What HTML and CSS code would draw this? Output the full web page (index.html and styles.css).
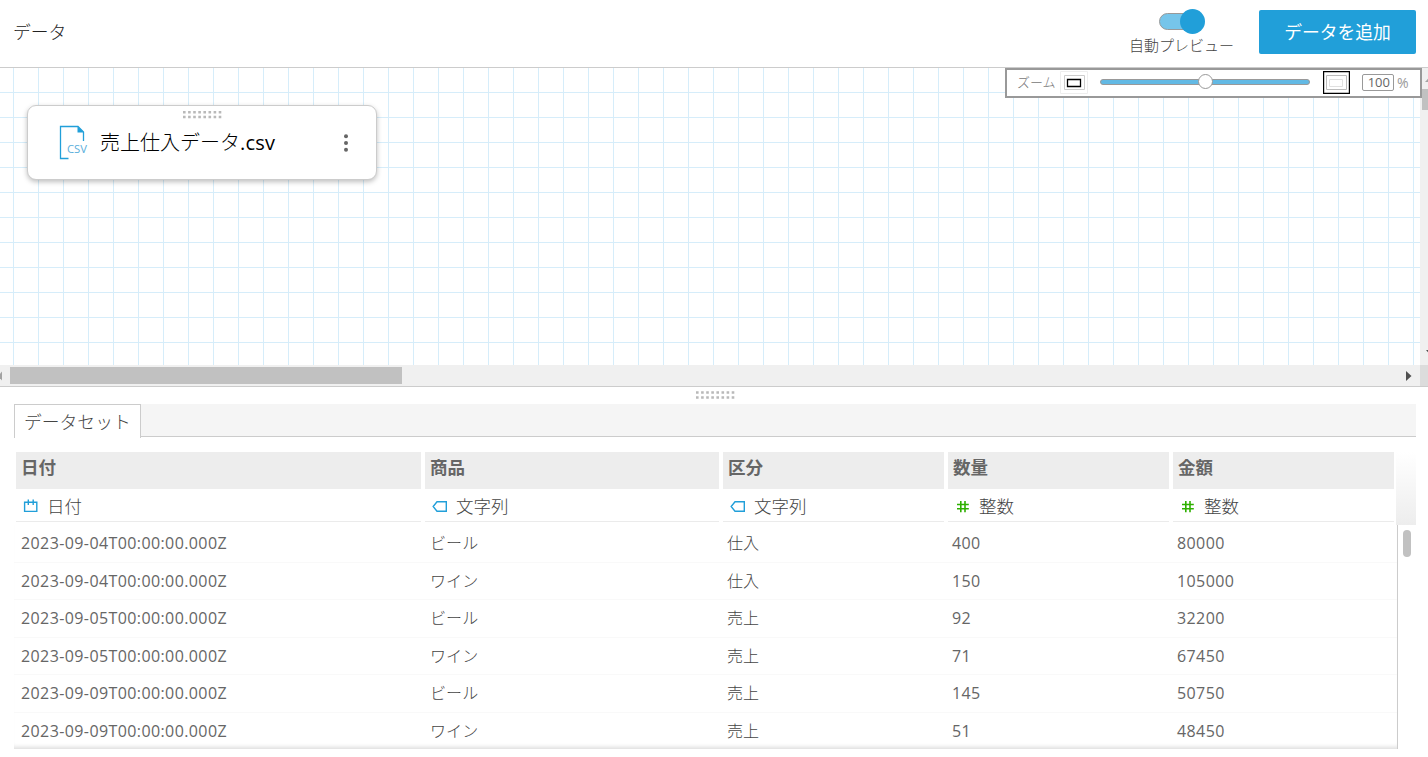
FILE: index.html
```
<!DOCTYPE html>
<html lang="ja">
<head>
    <meta charset="UTF-8">
    <meta name="viewport" content="width=device-width, initial-scale=1.0">
    <title>データ</title>
    <link rel="stylesheet" href="styles.css">
</head>
<body>
    <header class="page-header">
        <h1 class="page-title">データ</h1>
        <div class="auto-preview">
            <div class="toggle"><span class="toggle-track"></span><span class="toggle-knob"></span></div>
            <span class="toggle-label">自動プレビュー</span>
        </div>
        <button class="add-btn">データを追加</button>
    </header>

    <section class="canvas">
        <div class="canvas-main">
            <div class="canvas-grid">
                <div class="node">
                    <svg class="grip node-grip" width="39" height="8" viewBox="0 0 39 8"><path d="M0 1.2h39M0 6h39" stroke="#b9b9b9" stroke-width="2.4" stroke-dasharray="2.6 2.5"/></svg>
                    <svg class="csv-icon" width="30" height="36" viewBox="0 0 30 36">
                        <path d="M9.5 33.5H1.5V1.5H19L24.5 7V16" fill="none" stroke="#219fd9" stroke-width="1.3"/>
                        <path d="M18.5 1.2V7.5H25Z" fill="#219fd9"/>
                        <text x="8" y="28" class="csv-text" textLength="20" lengthAdjust="spacingAndGlyphs">CSV</text>
                    </svg>
                    <span class="node-name">売上仕入データ<span class="latin">.csv</span></span>
                    <svg class="node-menu" width="6" height="18" viewBox="0 0 6 18" fill="#666"><circle cx="3" cy="2.3" r="2"/><circle cx="3" cy="9" r="2"/><circle cx="3" cy="15.7" r="2"/></svg>
                </div>
            </div>
            <div class="v-scroll">
                <svg width="8" height="21" viewBox="0 0 8 21"><path d="M5 14h8L9 9.5Z" fill="#a3a3a3"/></svg>
                <div class="v-thumb"></div>
                <svg class="v-arrow" width="8" height="5" viewBox="0 0 8 5"><path d="M6 0h8L10 4.5Z" fill="#505050"/></svg>
            </div>
        </div>
        <div class="h-scroll">
            <svg width="10" height="10" viewBox="0 0 10 10"><path d="M2 .5V9.5L-2 5Z" fill="#a3a3a3"/></svg>
            <div class="h-thumb"></div>
            <svg class="h-arrow" width="6" height="10" viewBox="0 0 6 10"><path d="M0 0V10L5.5 5Z" fill="#505050"/></svg>
            <div class="scroll-corner"></div>
        </div>

        <div class="zoom-panel">
            <span class="zoom-label">ズーム</span>
            <svg class="zoom-out" width="28" height="23" viewBox="0 0 28 23" fill="none">
                <path d="M.5.5h27v22H.5Z" stroke="#eee"/>
                <path d="M4.5 4.5h20v14H4.5Z" stroke="#ccc"/>
                <path d="M7.5 8.5h13v7h-13Z" stroke="#000" stroke-width="1.3"/>
            </svg>
            <div class="slider"><span class="slider-knob"></span></div>
            <svg class="zoom-in" width="27" height="23" viewBox="0 0 27 23" fill="none">
                <path d="M.5.5h26v22H.5Z" stroke="#000" stroke-width="1.4"/>
                <path d="M3.5 4.5h20v14h-20Z" stroke="#bbb"/>
                <path d="M6.5 8.5h13v7h-13Z" stroke="#e0e0e0"/>
            </svg>
            <span class="zoom-value">100</span>
            <span class="zoom-unit">%</span>
        </div>
    </section>

    <div class="splitter">
        <svg class="grip" width="39" height="8" viewBox="0 0 39 8"><path d="M0 1.5h39M0 6.5h39" stroke="#b9b9b9" stroke-width="2.6" stroke-dasharray="2.6 2.5"/></svg>
    </div>

    <section class="dataset">
        <div class="tabs">
            <div class="tab">データセット</div>
        </div>

        <div class="table-head">
            <div class="columns">
                <div class="column">
                    <div class="col-name">日付</div>
                    <div class="col-type"><svg width="18" height="16" viewBox="0 0 18 16"><path d="M2.6 5.2H14.8V14.4H2.6ZM6.3 2.5V8M11.2 2.5V8" fill="none" stroke="#219fd9" stroke-width="1.4"/></svg>日付</div>
                </div>
                <div class="column">
                    <div class="col-name">商品</div>
                    <div class="col-type"><svg width="18" height="16" viewBox="0 0 18 16"><path d="M2.2 9.5L6 4.7H15.3V14.3H6Z" fill="none" stroke="#219fd9" stroke-width="1.4"/></svg>文字列</div>
                </div>
                <div class="column">
                    <div class="col-name">区分</div>
                    <div class="col-type"><svg width="18" height="16" viewBox="0 0 18 16"><path d="M2.2 9.5L6 4.7H15.3V14.3H6Z" fill="none" stroke="#219fd9" stroke-width="1.4"/></svg>文字列</div>
                </div>
                <div class="column">
                    <div class="col-name">数量</div>
                    <div class="col-type"><svg width="18" height="16" viewBox="0 0 18 16"><path d="M3 7.5H14.8M3 11.7H14.8M6.8 4V15.3M11 4V15.3" fill="none" stroke="#2eb000" stroke-width="1.6"/></svg>整数</div>
                </div>
                <div class="column">
                    <div class="col-name">金額</div>
                    <div class="col-type"><svg width="18" height="16" viewBox="0 0 18 16"><path d="M3 7.5H14.8M3 11.7H14.8M6.8 4V15.3M11 4V15.3" fill="none" stroke="#2eb000" stroke-width="1.6"/></svg>整数</div>
                </div>
            </div>
            <div class="head-fade"></div>
        </div>

        <div class="table-body">
            <div class="rows">
                <div class="row"><span>2023-09-04T00:00:00.000Z</span><span class="text">ビール</span><span class="text">仕入</span><span>400</span><span>80000</span></div>
                <div class="row"><span>2023-09-04T00:00:00.000Z</span><span class="text">ワイン</span><span class="text">仕入</span><span>150</span><span>105000</span></div>
                <div class="row"><span>2023-09-05T00:00:00.000Z</span><span class="text">ビール</span><span class="text">売上</span><span>92</span><span>32200</span></div>
                <div class="row"><span>2023-09-05T00:00:00.000Z</span><span class="text">ワイン</span><span class="text">売上</span><span>71</span><span>67450</span></div>
                <div class="row"><span>2023-09-09T00:00:00.000Z</span><span class="text">ビール</span><span class="text">売上</span><span>145</span><span>50750</span></div>
                <div class="row"><span>2023-09-09T00:00:00.000Z</span><span class="text">ワイン</span><span class="text">売上</span><span>51</span><span>48450</span></div>
            </div>
            <div class="body-thumb"></div>
        </div>
    </section>
</body>
</html>
```
FILE: styles.css
```
* {
    margin: 0;
    padding: 0;
    box-sizing: border-box;
}

body {
    font-family: 'Open Sans', 'Noto Sans CJK JP', sans-serif;
    font-weight: 400;
    color: #666;
    background: #fff;
    height: 757px;
    overflow: hidden;
}

svg {
    display: block;
    flex: none;
}

/* header */
.page-header {
    display: flex;
    align-items: flex-start;
    height: 68px;
    padding: 10px 12px 0 13px;
    border-bottom: 1px solid #ccc;
}

.page-title {
    flex: 1;
    font-family: 'Noto Sans CJK JP', sans-serif;
    font-size: 17.8px;
    font-weight: 300;
    line-height: 43px;
    color: #222;
}

.auto-preview {
    display: flex;
    flex-direction: column;
    align-items: center;
    margin-top: -1px;
    margin-right: 25px;
}

.toggle {
    display: flex;
    align-items: center;
    width: 46px;
    height: 25px;
    margin-left: 2px;
}

.toggle-track {
    width: 38px;
    height: 17px;
    border: 1px solid #999;
    border-radius: 9px;
    background: #76c5ea;
}

.toggle-knob {
    width: 25px;
    height: 25px;
    margin-left: -17px;
    border-radius: 50%;
    background: #219fd9;
}

.toggle-label {
    font-family: 'Noto Sans CJK JP', sans-serif;
    font-size: 15px;
    font-weight: 300;
    line-height: 22px;
    color: #444;
}

.add-btn {
    width: 157px;
    height: 44px;
    padding-bottom: 2px;
    border: none;
    border-radius: 2px;
    background: #219fd9;
    color: #fff;
    font-family: 'Noto Sans CJK JP', sans-serif;
    font-size: 17.8px;
    cursor: pointer;
}

/* canvas */
.canvas {
    position: relative;
    height: 319px;
    border-bottom: 1px solid #ccc;
}

.canvas-main {
    display: flex;
    height: 297px;
}

.canvas-grid {
    flex: 1;
    padding: 37px 27px;
    background-image:
        linear-gradient(to right, #d6edfa 1px, transparent 1px),
        linear-gradient(to bottom, #d6edfa 1px, transparent 1px);
    background-size: 25px 25px;
    background-position: 13px 24px;
}

.node {
    position: relative;
    display: flex;
    align-items: center;
    width: 350px;
    height: 75px;
    padding: 0 27px 0 31px;
    border: 1px solid #ccc;
    border-radius: 9px;
    background: #fff;
    box-shadow: 0 2px 5px rgba(0, 0, 0, 0.25);
}

.node-grip {
    position: absolute;
    top: 5px;
    left: 155px;
}

.csv-text {
    font-family: 'Open Sans', sans-serif;
    font-size: 10.5px;
    font-weight: 400;
    fill: #5aaedb;
}

.node-name {
    flex: 1;
    margin-left: 11px;
    font-size: 20px;
    font-weight: 300;
    line-height: 28px;
    color: #000;
}

.node-name .latin {
    font-weight: 400;
    letter-spacing: 0.2px;
}

.v-scroll {
    display: flex;
    flex-direction: column;
    width: 8px;
    padding-bottom: 10px;
    background: #f0f0f0;
}

.v-thumb {
    height: 21px;
    margin-left: 2px;
    background: #c1c1c1;
}

.v-arrow {
    margin-top: auto;
}

.h-scroll {
    display: flex;
    align-items: center;
    height: 21px;
    background: #f0f0f0;
}

.h-thumb {
    width: 392px;
    height: 17px;
    background: #c1c1c1;
}

.h-arrow {
    margin-left: auto;
    margin-right: 8px;
}

.scroll-corner {
    width: 8px;
    height: 21px;
    background: #dcdcdc;
}

/* zoom controls float over the canvas */
.zoom-panel {
    position: absolute;
    top: 0;
    right: 6px;
    display: flex;
    align-items: center;
    width: 417px;
    height: 30px;
    padding-left: 10px;
    padding-bottom: 2px;
    border: 2px solid #999;
    background: #fff;
    font-size: 13px;
    color: #999;
}

.zoom-label {
    width: 43px;
    font-family: 'Noto Sans CJK JP', sans-serif;
    font-weight: 300;
    line-height: 20px;
    color: #777;
}

.slider {
    display: flex;
    align-items: center;
    justify-content: center;
    width: 210px;
    height: 6px;
    margin: 0 13px 0 12px;
    border: 1px solid #999;
    border-radius: 3px;
    background: #62b9e4;
}

.slider-knob {
    flex: none;
    width: 15px;
    height: 15px;
    margin-top: -2px;
    border: 1px solid #999;
    border-radius: 50%;
    background: #fff;
}

.zoom-value {
    width: 32px;
    height: 17px;
    margin: 0 3px 0 12px;
    padding-right: 3px;
    border: 1px solid #999;
    border-radius: 2px;
    line-height: 15px;
    text-align: right;
    color: #666;
}

.zoom-unit {
    font-size: 14px;
}

.splitter {
    display: flex;
    justify-content: center;
    height: 17px;
    padding-top: 4px;
    padding-left: 2px;
}

/* dataset preview */
.dataset {
    padding: 0 12px 0 14px;
}

.tabs {
    display: flex;
    height: 33px;
    border-bottom: 1px solid #ccc;
    background: #f5f5f5;
}

.tab {
    width: 127px;
    height: 34px;
    padding-left: 9px;
    border: 1px solid #ccc;
    border-bottom: none;
    background: #fff;
    color: #444;
    font-family: 'Noto Sans CJK JP', sans-serif;
    font-size: 17.8px;
    font-weight: 300;
    line-height: 32px;
}

.table-head {
    display: flex;
    justify-content: space-between;
    height: 73px;
    margin-top: 15px;
    padding-left: 2px;
}

.columns {
    display: grid;
    grid-template-columns: 405px 294px 221px 221px 221px;
    column-gap: 4px;
}

.col-name {
    height: 37px;
    padding-left: 5px;
    background: #ededed;
    font-family: 'Noto Sans CJK JP', sans-serif;
    font-size: 17.5px;
    font-weight: 700;
    line-height: 29px;
}

.col-type {
    display: flex;
    align-items: center;
    height: 33px;
    gap: 7px;
    padding-left: 6px;
    border-bottom: 1px solid #ebebeb;
    color: #444;
    font-family: 'Noto Sans CJK JP', sans-serif;
    font-size: 17.5px;
    font-weight: 300;
}

.head-fade {
    width: 20px;
    background: linear-gradient(#fff, #ededed);
}

.table-body {
    display: flex;
    height: 224px;
}

.rows {
    width: 1384px;
    border-right: 1px solid #ccc;
    overflow: hidden;
    box-shadow: inset 0 -5px 4px -3px #ddd;
}

.row {
    display: grid;
    grid-template-columns: 409px 297px 225px 225px 221px;
    align-items: center;
    height: 37.5px;
    padding-left: 7px;
    border-bottom: 1px solid #f9f9f9;
    font-size: 16px;
    letter-spacing: 0.4px;
    line-height: 24px;
}

.row .text {
    color: #444;
    font-weight: 300;
    letter-spacing: 0.1px;
}

.row:last-child {
    border-bottom: none;
}

.body-thumb {
    width: 8px;
    height: 27px;
    margin: 5px 0 0 5px;
    border-radius: 4px;
    background: #c1c1c1;
}
```
